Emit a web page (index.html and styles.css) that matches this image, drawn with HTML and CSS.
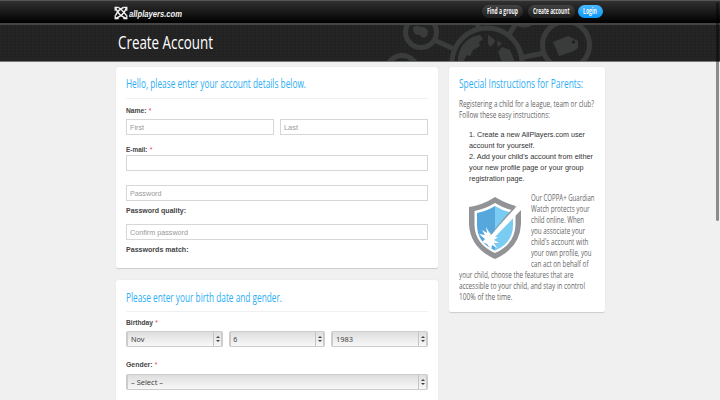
FILE: index.html
```html
<!DOCTYPE html>
<html lang="en">
<head>
<meta charset="utf-8">
<title>Create Account</title>
<link rel="stylesheet" href="styles.css">
</head>
<body>
<header class="topbar">
  <div class="wrap topbar-row">
    <div class="brand">
      <svg width="14" height="14" viewBox="0 0 14 14" fill="none" stroke="#f4f4f4">
        <path d="M1.2 4.7V1.3h3.5M9.3 1.3h3.5v3.4M1.2 9.3v3.4h3.5M9.3 12.7h3.5V9.3" stroke-width="1.3"/>
        <path d="M1.5 1.5C3 6 7 10.500 12.500 12.500M12.500 1.500C11 6 7 10.500 1.500 12.500M4.500 1.500C7 3 9 5 12.500 9.500M1.500 9.500C3 6 6 3 9.500 1.500" stroke-width="1.400"/>
      </svg>
      <span class="fit logo-text" data-w="53">allplayers.com</span>
    </div>
    <nav class="nav">
      <a class="pill find"><span class="fit" data-w="31">Find a group</span></a>
      <a class="pill create"><span class="fit" data-w="36.500">Create account</span></a>
      <a class="pill login"><span class="fit" data-w="14">Login</span></a>
    </nav>
  </div>
</header>
<section class="banner">
  <svg class="network" width="240" height="38" viewBox="0 0 240 38">
    <g fill="none" stroke="#3a3c3c" stroke-width="5">
      <circle cx="61" cy="8" r="15.500"/>
      <circle cx="127" cy="39" r="35"/>
      <circle cx="206" cy="21" r="23.500"/>
      <circle cx="42" cy="47" r="15.500"/>
      <circle cx="164" cy="-12" r="13"/>
      <path d="M74 16l20 9M149 11l7-12M160 34l24-5M118 5V0"/>
    </g>
    <g fill="#3a3c3c">
      <path d="M53 4q3-4 7-1 5-1 8 4l-1 5q-4 4-7-1-7 1-7-7z"/>
      <path d="M193 18l15-6 10 5v7l-4 3-15 5z"/>
      <path d="M98 33q2-13 14-20l8-2 3 4-4 3 1 4-7 4-3 6-3-1-4 7h-5zM128 11l7 5-1 3-4 4-2-4zM137 17l5 2-4 4zM138 28l4-5 8 3 5 12h-13z"/>
    </g>
    <circle cx="213.500" cy="18" r="1.800" fill="#222"/>
  </svg>
  <div class="wrap"><h1><span class="fit" data-w="95">Create Account</span></h1></div>
</section>
<main class="wrap columns">
  <div class="main-col">
    <section class="card account">
      <h2><span class="fit" data-w="180">Hello, please enter your account details below.</span></h2>
      <div class="label"><span class="fit" data-w="20.500">Name:</span><i>*</i></div>
      <div class="row">
        <div class="input"><span class="fit" data-w="14">First</span></div>
        <div class="input"><span class="fit" data-w="14">Last</span></div>
      </div>
      <div class="label email-label"><span class="fit" data-w="21.500">E-mail:</span><i>*</i></div>
      <div class="input"></div>
      <div class="input password"><span class="fit" data-w="31.500">Password</span></div>
      <div class="label note"><span class="fit" data-w="60">Password quality:</span></div>
      <div class="input confirm"><span class="fit" data-w="58">Confirm password</span></div>
      <div class="label note"><span class="fit" data-w="62.500">Passwords match:</span></div>
    </section>
    <section class="card birth">
      <h2><span class="fit" data-w="156">Please enter your birth date and gender.</span></h2>
      <div class="label"><span class="fit" data-w="27">Birthday</span><i>*</i></div>
      <div class="row">
        <div class="select"><span class="fit" data-w="13.500">Nov</span><b></b></div>
        <div class="select"><span>6</span><b></b></div>
        <div class="select"><span class="fit" data-w="17">1983</span><b></b></div>
      </div>
      <div class="label gender-label"><span class="fit" data-w="26.500">Gender:</span><i>*</i></div>
      <div class="select"><span class="fit" data-w="32">– Select –</span><b></b></div>
    </section>
  </div>
  <aside class="card side">
    <h2><span class="fit" data-w="124">Special Instructions for Parents:</span></h2>
    <p class="narrow intro">
      <span class="line"><span class="fit" data-w="135">Registering a child for a league, team or club?</span></span>
      <span class="line"><span class="fit" data-w="91">Follow these easy instructions:</span></span>
    </p>
    <div class="steps">
      <span class="line"><span class="fit" data-w="116">1. Create a new AllPlayers.com user</span></span>
      <span class="line"><span class="fit" data-w="65.500">account for yourself.</span></span>
      <span class="line"><span class="fit" data-w="124">2. Add your child's account from either</span></span>
      <span class="line"><span class="fit" data-w="114.500">your new profile page or your group</span></span>
      <span class="line"><span class="fit" data-w="55.500">registration page.</span></span>
    </div>
    <div class="guardian">
      <svg class="shield" width="54" height="63" viewBox="0 0 54 63">
        <path d="M27 0Q40 8 53 10V27Q52 51 27 62Q2 51 1 27V10Q15 8 27 0Z" fill="#929397"/>
        <path d="M27 6Q37 12 47.500 14V28Q47 47 27 56Q7 47 6.500 28V14Q17 12 27 6Z" fill="#fff"/>
        <path d="M27 9V53.500Q9 46 9 28V16Q19 14 27 9Z" fill="#56a8dc"/>
        <path d="M27 9Q35 14 45 16V28Q45 46 27 53.500Z" fill="#7accf3"/>
        <path d="M22 36L25 40 30 40 26 43 31 46 26 46 29 51 24 48 23 53 19 47 14 45 17 42 11 37 17 38 14 33 19 36 18 30 21 35Z" fill="#fff"/>
        <path d="M48 9L54 8 53 13 25 42 19 43Z" fill="#fff"/>
        <path d="M44 12L49 9 24 36 20 40Z" fill="#929397"/>
      </svg>
      <div class="narrow">
        <span class="line"><span class="fit" data-w="63.500">Our COPPA+ Guardian</span></span>
        <span class="line"><span class="fit" data-w="58.500">Watch protects your</span></span>
        <span class="line"><span class="fit" data-w="53">child online. When</span></span>
        <span class="line"><span class="fit" data-w="54">you associate your</span></span>
        <span class="line"><span class="fit" data-w="57.500">child's account with</span></span>
        <span class="line"><span class="fit" data-w="60.500">your own profile, you</span></span>
        <span class="line"><span class="fit" data-w="57.500">can act on behalf of</span></span>
      </div>
    </div>
    <div class="narrow">
      <span class="line"><span class="fit" data-w="114.500">your child, choose the features that are</span></span>
      <span class="line"><span class="fit" data-w="126">accessible to your child, and stay in control</span></span>
      <span class="line"><span class="fit" data-w="53.500">100% of the time.</span></span>
    </div>
  </aside>
</main>
<div class="scroll-thumb"></div>
<script src="fit.js"></script>
</body>
</html>
```
FILE: styles.css
```css
* { box-sizing: border-box; }
body {
  margin: 0;
  height: 400px;
  overflow: hidden;
  position: relative;
  background: #f0f0f0;
  font-family: "Liberation Sans", sans-serif;
  font-size: 7.5px;
  color: #444;
}
.wrap { width: 489px; margin-left: 116px; }
.fit {
  display: inline-block;
  white-space: nowrap;
  transform-origin: left center;
}
.topbar {
  height: 25px;
  border-top: 1px solid #555;
  border-bottom: 2px solid #444;
  background: linear-gradient(#313131, #000);
}
.topbar-row { display: flex; justify-content: space-between; }
.brand { display: flex; height: 21px; margin-left: -2px; padding-top: 5px; }
.logo-text {
  font-size: 9.5px;
  line-height: 15px;
  font-weight: bold;
  font-style: italic;
  color: #f4f4f4;
  margin-left: 1px;
}
.nav { display: flex; padding: 4px 2.5px 0 0; }
.pill {
  height: 13px;
  border-radius: 7px;
  line-height: 12px;
  padding-left: 5px;
  overflow: hidden;
  font-family: "Open Sans", sans-serif;
  font-size: 8px;
  font-weight: bold;
  color: #f4f4f4;
  background: linear-gradient(#444, #1c1c1c);
}
.find { width: 41px; margin-right: 5px; }
.create { width: 47px; margin-right: 3px; }
.login { width: 25px; background: linear-gradient(#4cb8ff, #0897f8); }
.banner {
  height: 37px;
  position: relative;
  overflow: hidden;
  border-bottom: 1px solid #777;
  background:
    repeating-linear-gradient(90deg, rgba(255,255,255,.012) 0 1px, transparent 1px 4px),
    repeating-linear-gradient(rgba(255,255,255,.012) 0 1px, transparent 1px 3px),
    #222;
}
.network { position: absolute; left: 360px; top: -1px; }
h1 {
  margin: 0;
  padding: 0 0 0 2px;
  font: 400 18.5px/34px "Open Sans", sans-serif;
  color: #fff;
}
.columns { display: flex; align-items: flex-start; gap: 11px; padding-top: 5px; }
.main-col { width: 322px; display: grid; gap: 12px; }
.card {
  background: #fff;
  border-radius: 2px;
  padding: 0 10px;
  box-shadow: 0 .5px 1px rgba(0,0,0,.15);
}
.account { height: 201px; }
.birth { height: 130px; }
h2 {
  margin: 0;
  height: 32px;
  padding-top: 1px;
  border-bottom: 1px solid #f0f0f0;
  font: 500 12px/32px "Open Sans", sans-serif;
  color: #2caef5;
}
.label {
  height: 10px;
  line-height: 10px;
  margin: 7px 0 3px;
  display: flex;
  font-weight: bold;
  color: #444;
}
.label i { color: #f0525a; font-style: normal; font-weight: 400; margin-left: 2px; }
.row { display: flex; gap: 6px; }
.row > * { flex: 1; }
.input {
  height: 16px;
  border: 1px solid #d7d7d7;
  padding-left: 2.5px;
  line-height: 15px;
  background: #fff;
  color: #999;
  font-size: 7.5px;
}
.email-label { margin: 10px 0 0; }
.password { margin-top: 14px; }
.note { margin: 5px 0 0; }
.confirm { margin-top: 8px; }
.birth h2 { height: 32px; line-height: 33px; }
.birth .label { margin: 6px 0 3px; }
.birth .gender-label { margin: 13px 0 4px; }
.select {
  height: 16px;
  position: relative;
  border: 1px solid #ccc;
  border-left: 2px solid #ccc;
  border-right: 2px solid #ccc;
  border-radius: 2px;
  background: linear-gradient(#dedede, #f8f8f8);
  padding-left: 2.5px;
  line-height: 15px;
  font-family: "Noto Sans", sans-serif;
  font-size: 7px;
  color: #444;
}
.select b {
  position: absolute;
  right: 0;
  top: 0;
  width: 8px;
  height: 14px;
  border-left: 1px solid #c4c4c4;
}
.select b::before, .select b::after {
  content: "";
  position: absolute;
  left: 2px;
  border: 2px solid transparent;
}
.select b::before { top: 4px; border-bottom: 2.5px solid #444; border-top: 0; }
.select b::after { top: 8px; border-top: 2.5px solid #444; border-bottom: 0; }
.side { width: 156px; height: 245px; }
.side h2 { border: 0; height: 31px; }
.line { display: block; height: 11px; line-height: 11px; }
.narrow { font-family: "Open Sans", sans-serif; font-size: 8.5px; color: #666; }
.intro { margin: 0; }
.steps { font-size: 7.5px; color: #333; margin: 9px 0 8px 10px; }
.guardian { display: flex; gap: 9px; height: 77px; }
.shield { margin: 5px 0 0 9px; flex: none; }
.scroll-thumb {
  position: absolute;
  right: 1px;
  top: 2px;
  width: 3.5px;
  height: 219px;
  border-radius: 2px;
  background: rgba(0,0,0,.42);
}
```
FILE: fit.js
```js
document.querySelectorAll(".fit").forEach(function (el) {
  var target = parseFloat(el.dataset.w);
  var natural = el.getBoundingClientRect().width;
  el.style.transform = "scaleX(" + target / natural + ")";
  el.style.marginRight = (target - natural) + "px";
});
```
